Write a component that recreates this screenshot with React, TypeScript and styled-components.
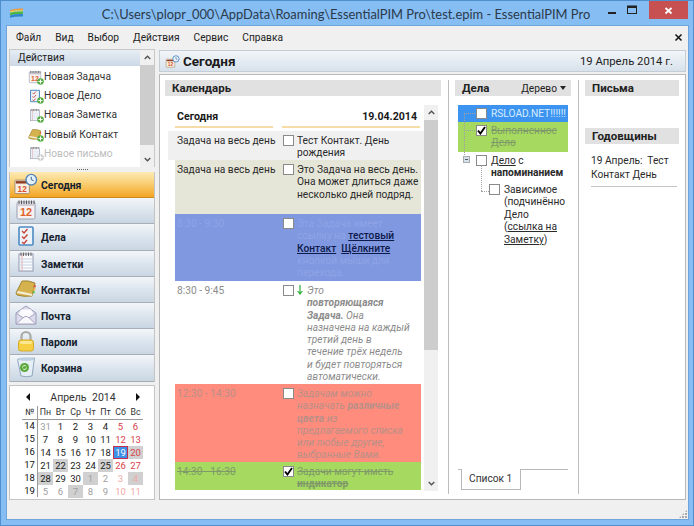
import React from 'react';
import styled, { createGlobalStyle } from 'styled-components';

const GlobalStyle = createGlobalStyle`
  html, body {
    margin: 0;
    padding: 0;
    width: 694px;
    height: 526px;
    overflow: hidden;
    font-family: Roboto, "Noto Sans", sans-serif;
    font-size: 10.2px;
    color: #1a1a1a;
  }
  * { box-sizing: border-box; }
`;

/* ---------- icons ---------- */

const Logo = () => (
  <svg width="15" height="11" viewBox="0 0 15 11">
    <path d="M1 2 Q7 0 14 .6 V2.4 Q7 2 1 3.6z" fill="#ee9a36" />
    <path d="M1 3.6 Q7 2 14 2.4 V3.6 Q7 3.2 1 4.8z" fill="#e7dd5a" />
    <path d="M1 4.8 Q7 3.2 14 3.6 V6 Q7 5.6 1 7.2z" fill="#52b548" />
    <path d="M1 7.4 Q7 5.8 14 6.2 V8.6 Q7 8.2 1 9.8z" fill="#2f86c9" />
  </svg>
);

const CalendarIcon = ({ size = 22 }: { size?: number }) => (
  <svg width={size} height={size} viewBox="0 0 22 22">
    <rect x="2" y="3" width="18" height="17" rx="1.5" fill="#f6f2f2" stroke="#9a9fb2" />
    <rect x="3" y="4.5" width="16" height="2.5" fill="#d0ccd8" />
    <path d="M4 1.5v3.5M6.5 1.5v3.5M9 1.5v3.5M11.5 1.5v3.5M14 1.5v3.5M16.5 1.5v3.5M19 1.5v3.5" stroke="#555" strokeWidth="1" />
    <text x="11" y="17" textAnchor="middle" fontSize="11" fontWeight="700" fill="#e0642c" fontFamily="Liberation Sans, sans-serif">12</text>
  </svg>
);

const TodayIcon = () => (
  <svg width="26" height="22" viewBox="0 0 26 22">
    <rect x="2" y="7" width="15" height="14" rx="1" fill="#f8efe0" stroke="#a58a70" />
    <rect x="3" y="8" width="13" height="2.5" fill="#8c3a24" />
    <text x="9.5" y="19" textAnchor="middle" fontSize="8.5" fontWeight="700" fill="#d9502c" fontFamily="Liberation Sans, sans-serif">12</text>
    <circle cx="19" cy="6.5" r="5.5" fill="#e6f1fb" stroke="#5487ba" strokeWidth="1.5" />
    <path d="M19 3.5v3l2.5 1" stroke="#355f8c" strokeWidth="1" fill="none" />
  </svg>
);

const TodoIcon = ({ size = 22 }: { size?: number }) => (
  <svg width={size} height={size} viewBox="0 0 22 22">
    <rect x="4" y="2" width="14" height="18" rx="1" fill="#eef3fa" stroke="#4d8ac4" strokeWidth="1.6" />
    <path d="M7 6l2 2 3.5-4M7 11.5l2 2 3.5-4M7 17l2 1.5 3-3.5" stroke="#c9453a" strokeWidth="1.4" fill="none" />
  </svg>
);

const NoteIcon = ({ size = 22 }: { size?: number }) => (
  <svg width={size} height={size} viewBox="0 0 22 22">
    <rect x="4" y="3" width="14" height="17" fill="#fbfbfd" stroke="#8f9ab0" />
    <path d="M7 3v17" stroke="#e9a6a6" />
    <path d="M5 8h12M5 11h12M5 14h12M5 17h12" stroke="#c6d2e4" />
    <path d="M6 1.5v3.5M8.5 1.5v3.5M11 1.5v3.5M13.5 1.5v3.5M16 1.5v3.5" stroke="#666" />
  </svg>
);

const BookIcon = ({ size = 22 }: { size?: number }) => (
  <svg width={size} height={size} viewBox="0 0 22 22">
    <path d="M1 16 L7 4 Q13 3 20 6 L17 19 Q8 20 2 18z" fill="#d6b24e" stroke="#a08433" />
    <path d="M1.5 16 Q8 17 17 19 L17.5 17 Q9 15 3 14z" fill="#f5eed6" />
    <path d="M19 8l2 .5-.5 2-2-.5z" fill="#d9502c" />
    <path d="M18.5 11l2 .5-.5 2-2-.5z" fill="#e8b52c" />
    <path d="M18 14l2 .5-.5 2-2-.5z" fill="#6cbf3c" />
  </svg>
);

const MailIcon = () => (
  <svg width="22" height="22" viewBox="0 0 22 22">
    <path d="M1 9 L11 2 L21 9 V20 H1z" fill="#dcdcec" stroke="#9d9bb8" />
    <path d="M3.5 10.5 L6 5.5 H16 L18.5 10.5 L12 14 H10z" fill="#fbfbfd" />
    <path d="M1 9 L9 14.5 M21 9 L13 14.5" stroke="#a9a7c2" />
    <path d="M1 20 L9 13 Q11 11.5 13 13 L21 20z" fill="#f8f8fc" stroke="#a9a7c2" />
  </svg>
);

const LockIcon = () => (
  <svg width="22" height="22" viewBox="0 0 22 22">
    <path d="M6.5 11V6.5a4.5 4.5 0 0 1 9 0V11" fill="none" stroke="#a9aaa6" strokeWidth="2.2" />
    <rect x="3.5" y="10" width="15" height="11" rx="2.5" fill="#f6cf42" stroke="#d7a92a" />
    <rect x="5" y="11" width="12" height="3" rx="1.5" fill="#fbe78e" />
  </svg>
);

const BinIcon = () => (
  <svg width="22" height="22" viewBox="0 0 22 22">
    <path d="M2.5 3.5 L19.5 2 L17 20 Q11 21.5 6 20z" fill="#e6eff7" stroke="#8fa7bd" />
    <ellipse cx="11" cy="3" rx="8.5" ry="1.8" fill="#bdd0e1" />
    <circle cx="9.5" cy="11.5" r="4.5" fill="#5aa83a" />
    <path d="M7.5 11.5a2 2 0 0 1 3.6-1.2M11.5 11.5a2 2 0 0 1-3.6 1.2" stroke="#e8f5dc" fill="none" />
  </svg>
);

const PlusBadge = ({ muted }: { muted?: boolean }) => (
  <svg width="7" height="7" viewBox="0 0 7 7">
    <circle cx="3.5" cy="3.5" r="3.3" fill={muted ? '#cfcfcf' : '#58ad45'} />
    <path d="M1.5 3.5h4M3.5 1.5v4" stroke="#fff" strokeWidth="1" />
  </svg>
);

const CheckMark = () => (
  <svg width="9" height="9" viewBox="0 0 9 9">
    <path d="M1 4.5 L3.4 7.5 L8 1" fill="none" stroke="#000" strokeWidth="1.9" />
  </svg>
);

const Chevron = ({ up }: { up?: boolean }) => (
  <svg width="7" height="5" viewBox="0 0 7 5">
    <path d={up ? 'M.7 4 L3.5 1.2 L6.3 4' : 'M.7 1 L3.5 3.8 L6.3 1'} fill="none" stroke="#505050" strokeWidth="1.3" />
  </svg>
);

/* ---------- window frame ---------- */

const Win = styled.div`
  width: 694px;
  height: 526px;
  background: #86bdf3;
  display: flex;
  flex-direction: column;
  border: 1px solid #4f8fd0;
  overflow: hidden;
`;

const TitleBar = styled.div`
  height: 25px;
  flex: none;
  display: flex;
  align-items: flex-start;
  padding-left: 8px;
`;

const LogoSlot = styled.div`
  width: 15px;
  padding-top: 7px;
`;

const TitleText = styled.div`
  flex: 1;
  text-align: center;
  font-family: Lato, "Open Sans", sans-serif;
  font-size: 12.9px;
  line-height: 26px;
  color: #2b3a4a;
  white-space: nowrap;
  padding-left: 66px;
`;

const WinButtons = styled.div`
  display: flex;
  align-items: flex-start;
  margin-right: 5px;
`;

const WinBtn = styled.div`
  width: 20px;
  height: 18px;
  display: flex;
  align-items: center;
  justify-content: center;
`;

const CloseBtn = styled.div`
  width: 39px;
  height: 18px;
  margin-left: 7px;
  background: #c75050;
  color: #fff;
  display: flex;
  align-items: center;
  justify-content: center;
`;

const Client = styled.div`
  margin: 0 5px 6px 6px;
  flex: 1;
  min-height: 0;
  background: #f0f0f0;
  display: flex;
  flex-direction: column;
  outline: 1px solid #6fa5da;
`;

const MenuBar = styled.div`
  height: 23px;
  flex: none;
  display: flex;
  align-items: center;
  padding: 0 5px 0 9px;
  color: #222;
`;

const MenuItem = styled.span`
  margin-right: 14px;
`;

const MenuClose = styled.div`
  margin-left: auto;
  display: flex;
`;

const Body = styled.div`
  flex: 1;
  min-height: 0;
  display: flex;
  padding: 0 2px 0 2px;
  gap: 4px;
`;

const StatusBar = styled.div`
  height: 19px;
  flex: none;
  display: flex;
  justify-content: flex-end;
  align-items: flex-end;
  padding: 0 1px 1px 0;
`;

const Grip = styled.div`
  width: 8px;
  height: 8px;
  background-image: radial-gradient(circle at 1px 1px, #a8a8a8 1px, transparent 1px);
  background-size: 3px 3px;
  clip-path: polygon(100% 0, 100% 100%, 0 100%);
`;

/* ---------- sidebar ---------- */

const Side = styled.div`
  width: 146px;
  flex: none;
  display: flex;
  flex-direction: column;
`;

const ActionsBox = styled.div`
  height: 118px;
  flex: none;
  background: #fff;
  border: 1px solid #c8c8c8;
  border-bottom: none;
  display: flex;
  overflow: hidden;
`;

const ActionsMain = styled.div`
  flex: 1;
  min-width: 0;
`;

const ActionsHeader = styled.div`
  height: 16px;
  margin-bottom: 1px;
  padding-left: 8px;
  line-height: 15px;
  color: #222;
  background: linear-gradient(#e6edf4, #ccd9e6);
`;

const ActionRow = styled.div<{ $muted?: boolean }>`
  height: 19.2px;
  display: flex;
  align-items: center;
  padding-left: 18px;
  gap: 2px;
  color: ${p => (p.$muted ? '#bdbdbd' : '#333')};
`;

const ActionIcon = styled.div`
  position: relative;
  width: 14px;
  height: 14px;
  flex: none;
  & > svg:first-child {
    width: 14px;
    height: 14px;
    display: block;
  }
`;

const ActionBadge = styled.div`
  position: absolute;
  right: -2px;
  bottom: -1px;
  display: flex;
`;

const Scrollbar = styled.div`
  width: 14px;
  flex: none;
  background: #f0f0f0;
  display: flex;
  flex-direction: column;
`;

const ScrollArrow = styled.div`
  height: 15px;
  flex: none;
  display: flex;
  align-items: center;
  justify-content: center;
`;

const ScrollThumb = styled.div<{ $h: number }>`
  height: ${p => p.$h}px;
  flex: none;
  background: #cdcdcd;
`;

const ScrollRest = styled.div`
  flex: 1;
`;

const Splitter = styled.div`
  height: 5px;
  flex: none;
  display: flex;
  justify-content: center;
  align-items: center;
  &::before {
    content: '';
    width: 11px;
    height: 1px;
    background-image: linear-gradient(90deg, #666 1px, transparent 1px);
    background-size: 2px 1px;
  }
`;

const NavList = styled.div`
  flex: none;
  border: 1px solid #c4c4c4;
  border-top: none;
  border-bottom: none;
`;

const NavItem = styled.div<{ $active?: boolean }>`
  height: 26.2px;
  display: flex;
  align-items: center;
  padding: 2px 0 0 3px;
  gap: 3px;
  font-weight: 700;
  font-size: 10.4px;
  color: #14202c;
  border-bottom: 1px solid ${p => (p.$active ? '#c98a1e' : '#a7aeb6')};
  background: ${p =>
    p.$active
      ? 'linear-gradient(#fdebb4, #f9cf74 45%, #f3a524)'
      : 'linear-gradient(#f3f6f9, #dce5ee 50%, #c9d6e2)'};
`;

const NavIcon = styled.div`
  width: 25px;
  height: 22px;
  margin-top: -4px;
  flex: none;
  display: flex;
  align-items: center;
  justify-content: center;
`;

const HeaderIcon = styled.div`
  width: 15px;
  height: 15px;
  flex: none;
  display: flex;
  & > svg {
    width: 15px;
    height: 15px;
  }
`;

const MiniCal = styled.div`
  margin-top: 3px;
  height: 115px;
  flex: none;
  background: #fff;
  border: 1px solid #c4c4c4;
  padding: 4px 0 0 12px;
`;

const MiniHead = styled.div`
  height: 15px;
  display: flex;
  align-items: center;
  justify-content: space-between;
  width: 114px;
  margin-left: 4px;
  font-size: 10.5px;
  color: #333;
`;

const MiniArrow = styled.span<{ $dir: 'l' | 'r' }>`
  width: 0;
  height: 0;
  border-top: 4px solid transparent;
  border-bottom: 4px solid transparent;
  ${p => (p.$dir === 'l' ? 'border-right: 4px solid #111;' : 'border-left: 4px solid #111;')}
`;

const MiniMonth = styled.span`
  word-spacing: 3px;
`;

const MiniGrid = styled.div`
  display: grid;
  grid-template-columns: 16px repeat(7, 15px);
  grid-auto-rows: 13px;
  margin-top: 1px;
  font-size: 9.5px;
`;

const WeekCell = styled.div<{ $head?: boolean }>`
  text-align: center;
  line-height: 13px;
  color: #111;
  border-right: 1px solid #9a9a9a;
  ${p => p.$head && 'border-bottom: 1px solid #9a9a9a; font-size: 8.8px; line-height: 12px; height: 14px; color: #333;'}
`;

const HeadCell = styled.div`
  text-align: center;
  font-size: 8.8px;
  line-height: 12px;
  height: 14px;
  color: #333;
  border-bottom: 1px solid #9a9a9a;
`;

const DayCell = styled.div<{ $tone: string; $mark?: boolean; $today?: boolean }>`
  text-align: center;
  line-height: 13px;
  margin-top: 1px;
  height: 13px;
  color: ${p =>
    p.$today
      ? '#fff'
      : p.$tone === 'red'
        ? '#d9404a'
        : p.$tone === 'pale'
          ? '#f0a8a8'
          : p.$tone === 'gray'
            ? '#a0a0a0'
            : '#1a1a1a'};
  background: ${p => (p.$today ? '#3d8fe8' : p.$mark ? '#d0d0d0' : 'transparent')};
  ${p => p.$today && 'box-shadow: inset 0 0 0 1px #c22f4a;'}
`;

/* ---------- main area ---------- */

const Main = styled.div`
  flex: 1;
  min-width: 0;
  display: flex;
  flex-direction: column;
  gap: 2px;
  padding-top: 1px;
`;

const PageHeader = styled.div`
  height: 22px;
  flex: none;
  display: flex;
  align-items: center;
  padding: 0 12px 0 5px;
  gap: 3px;
  border: 1px solid #c4ccd4;
  background: linear-gradient(#f2f5f8, #d8e2ec);
`;

const PageTitle = styled.span`
  font-size: 13.5px;
  font-weight: 700;
  color: #1a1a1a;
`;

const PageDate = styled.span`
  margin-left: auto;
  font-size: 11.3px;
  color: #222;
`;

const Panel = styled.div`
  flex: 1;
  min-height: 0;
  background: #fff;
  border: 1px solid #b8b8b8;
  display: flex;
  padding: 5px;
`;

const Column = styled.div<{ $w: number; $line?: boolean }>`
  width: ${p => p.$w}px;
  flex: none;
  display: flex;
  flex-direction: column;
  ${p => p.$line && 'border-right: 1px solid #bdbdbd; padding-right: 7px; margin-right: 6px;'}
`;

const SectionHead = styled.div`
  height: 16px;
  flex: none;
  background: #e1e1e1;
  padding: 0 7px;
  display: flex;
  align-items: center;
  justify-content: space-between;
  font-weight: 700;
  font-size: 11.5px;
  color: #222;
`;

const TreeMode = styled.span`
  font-weight: 400;
  font-size: 10.2px;
  display: flex;
  align-items: center;
  gap: 3px;
  margin-right: -2px;
  &::after {
    content: '';
    border-left: 3.5px solid transparent;
    border-right: 3.5px solid transparent;
    border-top: 4px solid #222;
  }
`;

const CalBody = styled.div`
  flex: 1;
  min-height: 0;
  display: flex;
  margin: 9px 3px 3px 3px;
`;

const CalTable = styled.div`
  flex: 1;
  min-width: 0;
  display: flex;
  flex-direction: column;
`;

const DayHead = styled.div`
  height: 26px;
  flex: none;
  display: grid;
  grid-template-columns: 98px 138px;
  column-gap: 9px;
  margin-left: 7px;
  font-weight: 700;
  font-size: 10.6px;
`;

const DayHeadCell = styled.div<{ $right?: boolean }>`
  height: 23px;
  line-height: 23px;
  padding: 0 3px 0 2px;
  border-bottom: 2px solid #f6dca6;
  text-align: ${p => (p.$right ? 'right' : 'left')};
`;

const EventRow = styled.div<{ $bg: string; $h: number; $wide?: boolean }>`
  height: ${p => p.$h}px;
  flex: none;
  overflow: hidden;
  background: ${p => p.$bg};
  display: grid;
  grid-template-columns: 106px 1fr;
  ${p => (p.$wide ? 'padding: 3px 3px 0 9px;' : 'margin: 0 3px 0 7px; padding: 3px 0 0 2px;')}
  line-height: 12.3px;
`;

const TimeCell = styled.div<{ $c?: string; $strike?: boolean }>`
  padding-top: 1px;
  color: ${p => p.$c ?? '#2a2a2a'};
  ${p => p.$strike && 'text-decoration: line-through;'}
`;

const TaskCell = styled.div`
  display: flex;
  align-items: flex-start;
  gap: 3px;
`;

const Box = styled.div`
  width: 11px;
  height: 11px;
  margin-top: 1px;
  flex: none;
  background: #fff;
  border: 1px solid #8a8a8a;
  display: flex;
  align-items: center;
  justify-content: center;
`;

const TaskText = styled.div<{ $c?: string; $italic?: boolean; $strike?: boolean }>`
  flex: 1;
  min-width: 0;
  padding-top: 1px;
  color: ${p => p.$c ?? '#2a2a2a'};
  ${p => p.$italic && 'font-style: italic;'}
  ${p => p.$strike && 'text-decoration: line-through;'}
`;

const Arrow = styled.span`
  flex: none;
  width: 6px;
  margin-right: 1px;
  display: flex;
`;

const ALink = styled.span`
  color: #0d1a4a;
  font-weight: 500;
  text-decoration: underline;
`;

/* ---------- tree ---------- */

const TreeBody = styled.div`
  flex: 1;
  min-height: 0;
  display: flex;
  flex-direction: column;
  margin: 9px 0 0 3px;
  position: relative;
  line-height: 12.4px;
`;

const TreeRow = styled.div<{ $bg?: string; $h: number; $indent: number }>`
  height: ${p => p.$h}px;
  flex: none;
  width: 110px;
  display: flex;
  gap: 4px;
  overflow: hidden;
  background: ${p => p.$bg ?? 'transparent'};
  padding-left: ${p => p.$indent}px;
  position: relative;
`;

const TreeBox = styled(Box)`
  margin-top: 3px;
`;

const TreeText = styled.div<{ $c?: string; $nowrap?: boolean; $strike?: boolean }>`
  padding-top: 3px;
  flex: 1;
  min-width: 0;
  color: ${p => p.$c ?? '#2a2a2a'};
  ${p => p.$nowrap && 'white-space: nowrap;'}
  ${p => p.$strike && 'text-decoration: line-through;'}
`;

const Plain = styled.span`
  text-decoration: underline;
`;

const Bold = styled.b`
  font-weight: 700;
`;

const Expander = styled.div<{ $t: number }>`
  position: absolute;
  left: 5px;
  top: ${p => p.$t}px;
  width: 7px;
  height: 7px;
  background: #d8e0e8;
  border: 1px solid #a4acb4;
  &::after {
    content: '';
    display: block;
    margin: 1.5px 0 0 1px;
    width: 3px;
    height: 1px;
    background: #556;
  }
`;

const DotH = styled.div<{ $l: number; $t: number; $w: number }>`
  position: absolute;
  left: ${p => p.$l}px;
  top: ${p => p.$t}px;
  width: ${p => p.$w}px;
  border-top: 1px dotted #a0a0a0;
`;

const DotV = styled.div<{ $l: number; $t: number; $h: number }>`
  position: absolute;
  left: ${p => p.$l}px;
  top: ${p => p.$t}px;
  height: ${p => p.$h}px;
  border-left: 1px dotted #a0a0a0;
`;

const TabStrip = styled.div`
  height: 21px;
  flex: none;
  margin: 0 3px 4px 3px;
  padding-left: 3px;
  display: flex;
  align-items: flex-start;
  border-top: 1px solid #b8b8b8;
`;

const Tab = styled.div`
  width: 60px;
  height: 21px;
  margin-top: -1px;
  padding: 4px 0 0 7px;
  background: #fff;
  border: 1px solid #b8b8b8;
  border-top: none;
  color: #333;
`;

const MailBody = styled.div`
  height: 32px;
  flex: none;
`;

const AnnivText = styled.div`
  margin: 10px 2px 0 6px;
  padding-bottom: 5px;
  line-height: 13.5px;
  color: #2a2a2a;
  border-bottom: 1px solid #c4c4c4;
`;

const actions = [
  { label: 'Новая Задача', icon: <CalendarIcon /> },
  { label: 'Новое Дело', icon: <TodoIcon /> },
  { label: 'Новая Заметка', icon: <NoteIcon /> },
  { label: 'Новый Контакт', icon: <BookIcon /> },
  { label: 'Новое письмо', icon: <NoteIcon />, muted: true },
];

const nav = [
  { label: 'Сегодня', icon: <TodayIcon />, active: true },
  { label: 'Календарь', icon: <CalendarIcon /> },
  { label: 'Дела', icon: <TodoIcon /> },
  { label: 'Заметки', icon: <NoteIcon /> },
  { label: 'Контакты', icon: <BookIcon /> },
  { label: 'Почта', icon: <MailIcon /> },
  { label: 'Пароли', icon: <LockIcon /> },
  { label: 'Корзина', icon: <BinIcon /> },
];

type Day = [number, string?, boolean?, boolean?];

const weeks: { n: number; days: Day[] }[] = [
  { n: 14, days: [[31, 'gray'], [1], [2], [3], [4], [5, 'red'], [6, 'red']] },
  { n: 15, days: [[7], [8], [9], [10], [11], [12, 'red'], [13, 'red']] },
  { n: 16, days: [[14], [15], [16], [17], [18], [19, '', false, true], [20, 'red', true]] },
  { n: 17, days: [[21], [22, '', true], [23], [24], [25, '', true], [26, 'red'], [27, 'red']] },
  { n: 18, days: [[28, '', true], [29], [30], [1, 'gray', true], [2, 'gray'], [3, 'pale'], [4, 'pale', true]] },
  { n: 19, days: [[5, 'gray'], [6, 'gray'], [7, 'gray', true], [8, 'gray'], [9, 'gray'], [10, 'pale'], [11, 'pale']] },
];

const App = () => {
  return (
    <>
      <GlobalStyle />
      <Win>
        <TitleBar>
          <LogoSlot>
            <Logo />
          </LogoSlot>
          <TitleText>C:\Users\plopr_000\AppData\Roaming\EssentialPIM Pro\test.epim - EssentialPIM Pro</TitleText>
          <WinButtons>
            <WinBtn>
              <svg width="10" height="10" viewBox="0 0 10 10">
                <rect x="1" y="7" width="8" height="2" fill="#222" />
              </svg>
            </WinBtn>
            <WinBtn>
              <svg width="10" height="10" viewBox="0 0 10 10">
                <rect x="0.5" y="1" width="9" height="7.5" fill="none" stroke="#222" />
                <rect x="0.5" y="1" width="9" height="2" fill="#222" />
              </svg>
            </WinBtn>
            <CloseBtn>
              <svg width="9" height="9" viewBox="0 0 9 9">
                <path d="M1.5 2 L7.5 7.5 M7.5 2 L1.5 7.5" stroke="#fff" strokeWidth="1.8" />
              </svg>
            </CloseBtn>
          </WinButtons>
        </TitleBar>
        <Client>
          <MenuBar>
            {['Файл', 'Вид', 'Выбор', 'Действия', 'Сервис', 'Справка'].map(m => (
              <MenuItem key={m}>{m}</MenuItem>
            ))}
            <MenuClose>
              <svg width="9" height="9" viewBox="0 0 9 9">
                <path d="M1.5 1.5 L7.5 7.5 M7.5 1.5 L1.5 7.5" stroke="#111" strokeWidth="1.5" />
              </svg>
            </MenuClose>
          </MenuBar>
          <Body>
            <Side>
              <ActionsBox>
                <ActionsMain>
                  <ActionsHeader>Действия</ActionsHeader>
                  {actions.map(a => (
                    <ActionRow key={a.label} $muted={a.muted}>
                      <ActionIcon>
                        {a.icon}
                        <ActionBadge>
                          <PlusBadge muted={a.muted} />
                        </ActionBadge>
                      </ActionIcon>
                      {a.label}
                    </ActionRow>
                  ))}
                  <ActionRow $muted>
                    <ActionIcon>
                      <NoteIcon />
                    </ActionIcon>
                  </ActionRow>
                </ActionsMain>
                <Scrollbar>
                  <ScrollArrow>
                    <Chevron up />
                  </ScrollArrow>
                  <ScrollThumb $h={80} />
                  <ScrollRest />
                  <ScrollArrow>
                    <Chevron />
                  </ScrollArrow>
                </Scrollbar>
              </ActionsBox>
              <Splitter />
              <NavList>
                {nav.map(n => (
                  <NavItem key={n.label} $active={n.active}>
                    <NavIcon>{n.icon}</NavIcon>
                    {n.label}
                  </NavItem>
                ))}
              </NavList>
              <MiniCal>
                <MiniHead>
                  <MiniArrow $dir="l" />
                  <MiniMonth>Апрель 2014</MiniMonth>
                  <MiniArrow $dir="r" />
                </MiniHead>
                <MiniGrid>
                  <WeekCell $head>№</WeekCell>
                  {['Пн', 'Вт', 'Ср', 'Чт', 'Пт', 'Сб', 'Вс'].map(d => (
                    <HeadCell key={d}>{d}</HeadCell>
                  ))}
                  {weeks.map(w => (
                    <React.Fragment key={w.n}>
                      <WeekCell>{w.n}</WeekCell>
                      {w.days.map(([d, tone, mark, today], i) => (
                        <DayCell key={i} $tone={tone ?? ''} $mark={mark} $today={today}>
                          {d}
                        </DayCell>
                      ))}
                    </React.Fragment>
                  ))}
                </MiniGrid>
              </MiniCal>
            </Side>
            <Main>
              <PageHeader>
                <HeaderIcon>
                  <TodayIcon />
                </HeaderIcon>
                <PageTitle>Сегодня</PageTitle>
                <PageDate>19 Апрель 2014 г.</PageDate>
              </PageHeader>
              <Panel>
                <Column $w={284} $line>
                  <SectionHead>Календарь</SectionHead>
                  <CalBody>
                    <CalTable>
                      <DayHead>
                        <DayHeadCell>Сегодня</DayHeadCell>
                        <DayHeadCell $right>19.04.2014</DayHeadCell>
                      </DayHead>
                      <EventRow $bg="#f0f0f0" $h={29} $wide>
                        <TimeCell>Задача на весь день</TimeCell>
                        <TaskCell>
                          <Box />
                          <TaskText>Тест Контакт. День рождения</TaskText>
                        </TaskCell>
                      </EventRow>
                      <EventRow $bg="#e6e6d8" $h={54}>
                        <TimeCell>Задача на весь день</TimeCell>
                        <TaskCell>
                          <Box />
                          <TaskText>
                            Это Задача на весь день.
                            <br />
                            Она может длиться даже несколько дней подряд.
                          </TaskText>
                        </TaskCell>
                      </EventRow>
                      <EventRow $bg="#8098e0" $h={67}>
                        <TimeCell $c="#8ea4e6">8:30 - 9:30</TimeCell>
                        <TaskCell>
                          <Box />
                          <TaskText $c="#8ea4e6">
                            Эта Задача имеет
                            <br />
                            ссылку на <ALink>тестовый</ALink>
                            <br />
                            <ALink>Контакт</ALink>&nbsp; <ALink>Щёлкните</ALink>
                            <br />
                            кнопкой мыши для
                            <br />
                            перехода.
                          </TaskText>
                        </TaskCell>
                      </EventRow>
                      <EventRow $bg="#fff" $h={103}>
                        <TimeCell $c="#8c8c8c">8:30 - 9:45</TimeCell>
                        <TaskCell>
                          <Box />
                          <Arrow>
                            <svg width="6" height="11" viewBox="0 0 6 11">
                              <path d="M3 1 V10 M.7 7 L3 10 L5.3 7" fill="none" stroke="#2fae3a" strokeWidth="1.2" />
                            </svg>
                          </Arrow>
                          <TaskText $c="#8c8c8c" $italic>
                            Это
                            <br />
                            <Bold>повторяющаяся</Bold>
                            <br />
                            <Bold>Задача.</Bold> Она
                            <br />
                            назначена на каждый
                            <br />
                            третий день в
                            <br />
                            течение трёх недель
                            <br />
                            и будет повторяться
                            <br />
                            автоматически.
                          </TaskText>
                        </TaskCell>
                      </EventRow>
                      <EventRow $bg="#ff8c7c" $h={78}>
                        <TimeCell $c="#b89088">12:30 - 14:30</TimeCell>
                        <TaskCell>
                          <Box />
                          <TaskText $c="#b89088" $italic>
                            Задачам можно
                            <br />
                            назначать <Bold>различные</Bold>
                            <br />
                            <Bold>цвета</Bold> из
                            <br />
                            предлагаемого списка
                            <br />
                            или любые другие,
                            <br />
                            выбранные Вами.
                          </TaskText>
                        </TaskCell>
                      </EventRow>
                      <EventRow $bg="#a5d960" $h={28}>
                        <TimeCell $c="#7f9a68" $strike>14:30 - 16:30</TimeCell>
                        <TaskCell>
                          <Box>
                            <CheckMark />
                          </Box>
                          <TaskText $c="#7f9a68" $strike>
                            Задачи могут иметь
                            <br />
                            <Bold>индикатор</Bold>
                          </TaskText>
                        </TaskCell>
                      </EventRow>
                    </CalTable>
                    <Scrollbar>
                      <ScrollArrow>
                        <Chevron up />
                      </ScrollArrow>
                      <ScrollThumb $h={230} />
                      <ScrollRest />
                      <ScrollArrow>
                        <Chevron />
                      </ScrollArrow>
                    </Scrollbar>
                  </CalBody>
                </Column>
                <Column $w={124} $line>
                  <SectionHead>
                    Дела
                    <TreeMode>Дерево</TreeMode>
                  </SectionHead>
                  <TreeBody>
                    <TreeRow $bg="#3d94f0" $h={17} $indent={18}>
                      <TreeBox />
                      <TreeText $c="#d8ecff" $nowrap>RSLOAD.NET!!!!!!</TreeText>
                    </TreeRow>
                    <TreeRow $bg="#a5d960" $h={30} $indent={18}>
                      <TreeBox>
                        <CheckMark />
                      </TreeBox>
                      <TreeText $c="#7f9a68" $strike>Выполненное Дело</TreeText>
                    </TreeRow>
                    <TreeRow $h={29} $indent={18}>
                      <TreeBox />
                      <TreeText>
                        <Plain>Дело</Plain> с
                        <br />
                        <Bold>напоминанием</Bold>
                      </TreeText>
                    </TreeRow>
                    <TreeRow $h={66} $indent={31}>
                      <TreeBox />
                      <TreeText>
                        Зависимое
                        <br />
                        (подчинённо
                        <br />
                        Дело
                        <br />
                        (<Plain>ссылка на</Plain>
                        <br />
                        <Plain>Заметку</Plain>)
                      </TreeText>
                    </TreeRow>
                    <DotV $l={6} $t={8} $h={42} />
                    <DotH $l={6} $t={8} $w={11} />
                    <DotH $l={6} $t={25} $w={11} />
                    <DotV $l={23} $t={60} $h={26} />
                    <DotH $l={23} $t={86} $w={8} />
                    <Expander $t={51} />
                  </TreeBody>
                  <TabStrip>
                    <Tab>Список 1</Tab>
                  </TabStrip>
                </Column>
                <Column $w={94}>
                  <SectionHead>Письма</SectionHead>
                  <MailBody />
                  <SectionHead>Годовщины</SectionHead>
                  <AnnivText>19 Апрель:&nbsp; Тест Контакт День</AnnivText>
                </Column>
              </Panel>
            </Main>
          </Body>
          <StatusBar>
            <Grip />
          </StatusBar>
        </Client>
      </Win>
    </>
  );
};

export default App;
